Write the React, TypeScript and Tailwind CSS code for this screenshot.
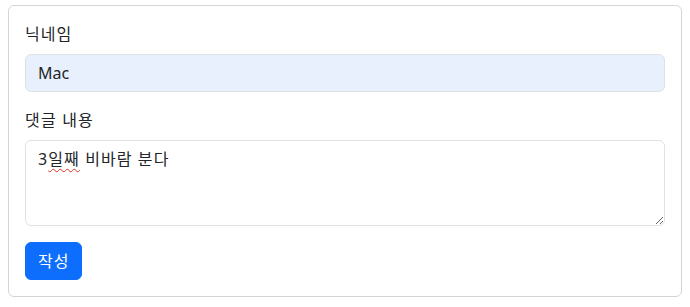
import { useState } from 'react';

const FONT = { fontFamily: '"Noto Sans", "Noto Sans CJK KR", sans-serif' };

export default function App() {
  const [nick, setNick] = useState('Mac');
  const [body, setBody] = useState('3일째 비바람 분다');

  return (
    <div className="bg-white min-h-screen px-2 pt-[5px] text-[#212529]" style={FONT}>
      <div className="border border-[#d5d5d5] rounded-md p-4">
        <label className="block mb-2 text-base leading-6 tracking-[1px]">닉네임</label>
        <input
          value={nick}
          onChange={e => setNick(e.target.value)}
          className="block w-full h-[38px] mb-4 px-3 rounded-md border border-[#dee2e6] bg-[#e8f0fe] text-base leading-6 outline-none"
        />
        <label className="block mb-2 text-base leading-6 tracking-[1.2px]">댓글 내용</label>
        <div className="relative mb-4">
          <textarea
            value={body}
            onChange={e => setBody(e.target.value)}
            rows={3}
            spellCheck={false}
            className="block w-full h-[86px] px-3 py-[6px] rounded-md border border-[#dee2e6] bg-white text-base leading-6 tracking-[1.1px] outline-none"
          />
          {body === '3일째 비바람 분다' && (
            <div className="absolute inset-0 px-[13px] py-[7px] text-base leading-6 tracking-[1.1px] text-transparent pointer-events-none">
              <span>3</span>
              <span className="underline decoration-wavy decoration-[#e0302a] decoration-1 underline-offset-[3px]">일째</span>
            </div>
          )}
        </div>
        <button className="h-[38px] px-3 rounded-md bg-[#0d6efd] border border-[#0d6efd] text-white text-base leading-6 tracking-[1px]">
          작성
        </button>
      </div>
    </div>
  );
}
